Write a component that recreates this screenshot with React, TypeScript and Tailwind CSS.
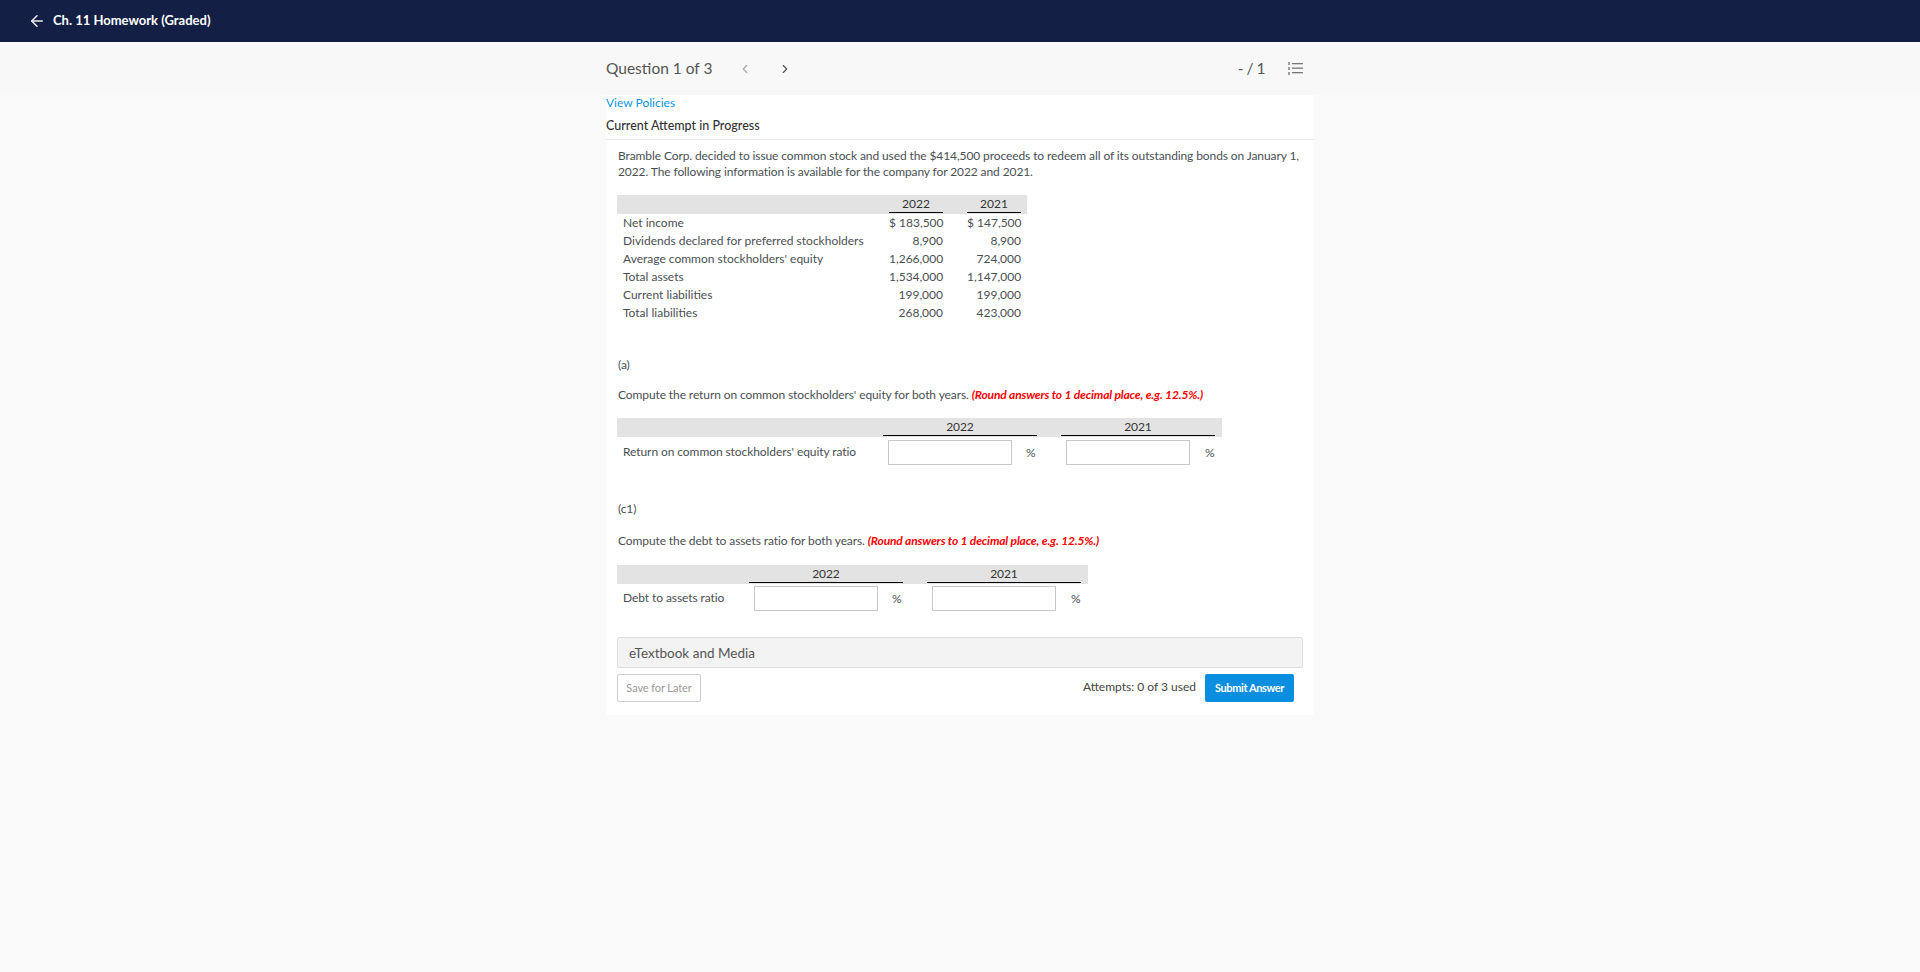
import React from 'react'
import { ArrowLeft, ChevronLeft, ChevronRight } from 'lucide-react'

const rows = [
    ['Net income', '$ 183,500', '$ 147,500'],
    ['Dividends declared for preferred stockholders', '8,900', '8,900'],
    ["Average common stockholders' equity", '1,266,000', '724,000'],
    ['Total assets', '1,534,000', '1,147,000'],
    ['Current liabilities', '199,000', '199,000'],
    ['Total liabilities', '268,000', '423,000'],
]

const InfoTable = () => {
    return (
        <div className="-ml-px mt-[15px] w-[410px] text-[12px] leading-[18px] tracking-normal text-[#4a4f54]">
            <div className="flex h-[19px] bg-[#e3e3e3] pl-[272px] text-[#333]">
                <div className="h-[18px] w-[54px] border-b border-black text-center leading-[17px]">2022</div>
                <div className="ml-[24px] h-[18px] w-[54px] border-b border-black text-center leading-[17px]">2021</div>
            </div>
            {rows.map((r) => (
                <div key={r[0]} className="flex h-[18px] pl-[6px]">
                    <div className="w-[266px]">{r[0]}</div>
                    <div className="w-[54px] whitespace-nowrap text-right">{r[1]}</div>
                    <div className="ml-[24px] w-[54px] whitespace-nowrap text-right">{r[2]}</div>
                </div>
            ))}
        </div>
    )
}

const AnswerTable = ({ label, width, first, gap }: { label: string; width: string; first: string; gap: string }) => {
    return (
        <div className={`${width} -ml-px text-[12px] tracking-[-0.08px] text-[#4a4f54]`}>
            <div className={`flex h-[19px] bg-[#e3e3e3] ${first} text-[#333]`}>
                <div className="h-[18px] w-[154px] border-b border-black text-center leading-[17px]">2022</div>
                <div className="ml-[24px] h-[18px] w-[154px] border-b border-black text-center leading-[17px]">2021</div>
            </div>
            <div className={`${gap} flex h-[25px] items-center ${first} relative`}>
                <span className="absolute left-[6px] top-[4px]">{label}</span>
                <div className="ml-[5px] h-[25px] w-[124px] border border-[#c8c8c8] bg-white"></div>
                <span className="w-[30px] pl-[14px] text-[12px]">%</span>
                <div className="ml-[24px] h-[25px] w-[124px] border border-[#c8c8c8] bg-white"></div>
                <span className="w-[25px] pl-[15px] text-[12px]">%</span>
            </div>
        </div>
    )
}

const NumberedList = () => (
    <svg width="15" height="13" viewBox="0 0 15 13" className="text-[#777]" fill="currentColor">
        <rect x="0" y="0" width="2" height="3" opacity="0.7" />
        <rect x="0" y="5" width="2" height="3" opacity="0.7" />
        <rect x="0" y="10" width="2" height="3" opacity="0.7" />
        <rect x="4" y="1" width="11" height="1.3" />
        <rect x="4" y="5.5" width="11" height="1.3" />
        <rect x="4" y="10" width="11" height="1.3" />
    </svg>
)

export default function App() {
    return (
        <div className="min-h-screen bg-[#fafafa] font-['Lato',sans-serif]">
            <header className="flex h-[42px] items-center bg-[#131f45] pl-[28px] text-white">
                <ArrowLeft size={18} strokeWidth={2} className="text-[#eee]" />
                <span className="ml-[7px] text-[13px] font-bold">Ch. 11 Homework (Graded)</span>
            </header>
            <div className="bg-[#f8f8f8]">
                <div className="mx-auto flex h-[53px] w-[708px] items-center text-[#555]">
                    <span className="text-[15.5px]">Question 1 of 3</span>
                    <ChevronLeft size={14} className="ml-[26px] text-[#aaa]" />
                    <ChevronRight size={14} className="ml-[26px] text-[#555]" />
                    <span className="ml-auto text-[15.5px] tracking-[-0.5px]">- / 1</span>
                    <div className="ml-[23px] mr-[11px]"><NumberedList /></div>
                </div>
            </div>
            <main className="mx-auto h-[620px] w-[708px] bg-white">
                <div className="text-[12px] leading-[15px] text-[#0a96e6]">View Policies</div>
                <div className="mt-[8px] h-[22px] border-b border-[#e8e8e8] text-[12.5px] font-medium leading-[15px] text-[#333]">Current Attempt in Progress</div>
                <div className="px-[12px] pt-[8px] text-[12px] leading-[16px] tracking-[-0.1px] text-[#4a4f54]">
                    <p>Bramble Corp. decided to issue common stock and used the $414,500 proceeds to redeem all of its outstanding bonds on January 1,<br />2022. The following information is available for the company for 2022 and 2021.</p>
                    <InfoTable />
                    <p className="mt-[35px]">(a)</p>
                    <p className="mt-[14px]">
                        Compute the return on common stockholders' equity for both years. <em className="font-bold tracking-[-0.15px] text-[#f00]">(Round answers to 1 decimal place, e.g. 12.5%.)</em>
                    </p>
                    <div className="mt-[15px]">
                        <AnswerTable label="Return on common stockholders' equity ratio" width="w-[605px]" first="pl-[266px]" gap="mt-[3px]" />
                    </div>
                    <p className="mt-[36px]">(c1)</p>
                    <p className="mt-[16px]">
                        Compute the debt to assets ratio for both years. <em className="font-bold tracking-[-0.15px] text-[#f00]">(Round answers to 1 decimal place, e.g. 12.5%.)</em>
                    </p>
                    <div className="mt-[16px]">
                        <AnswerTable label="Debt to assets ratio" width="w-[471px]" first="pl-[132px]" gap="mt-[2px]" />
                    </div>
                    <div className="-ml-px mt-[26px] flex h-[31px] w-[686px] items-center rounded-[2px] border border-[#ddd] bg-[#f3f3f3] pl-[11px] text-[13.5px] tracking-normal text-[#555]">eTextbook and Media</div>
                    <div className="mt-[6px] flex items-center tracking-normal">
                        <div className="-ml-px flex h-[28px] w-[84px] items-center justify-center rounded-[2px] border border-[#ccc] text-[11px] tracking-[-0.1px] text-[#999]">Save for Later</div>
                        <span className="-mt-[2px] ml-auto text-[12px] text-[#444]">Attempts: 0 of 3 used</span>
                        <div className="ml-[9px] mr-[8px] flex h-[28px] w-[89px] items-center justify-center rounded-[2px] bg-[#0a8ee0] text-[11px] font-bold tracking-[-0.4px] text-white">Submit Answer</div>
                    </div>
                </div>
            </main>
        </div>
    )
}
